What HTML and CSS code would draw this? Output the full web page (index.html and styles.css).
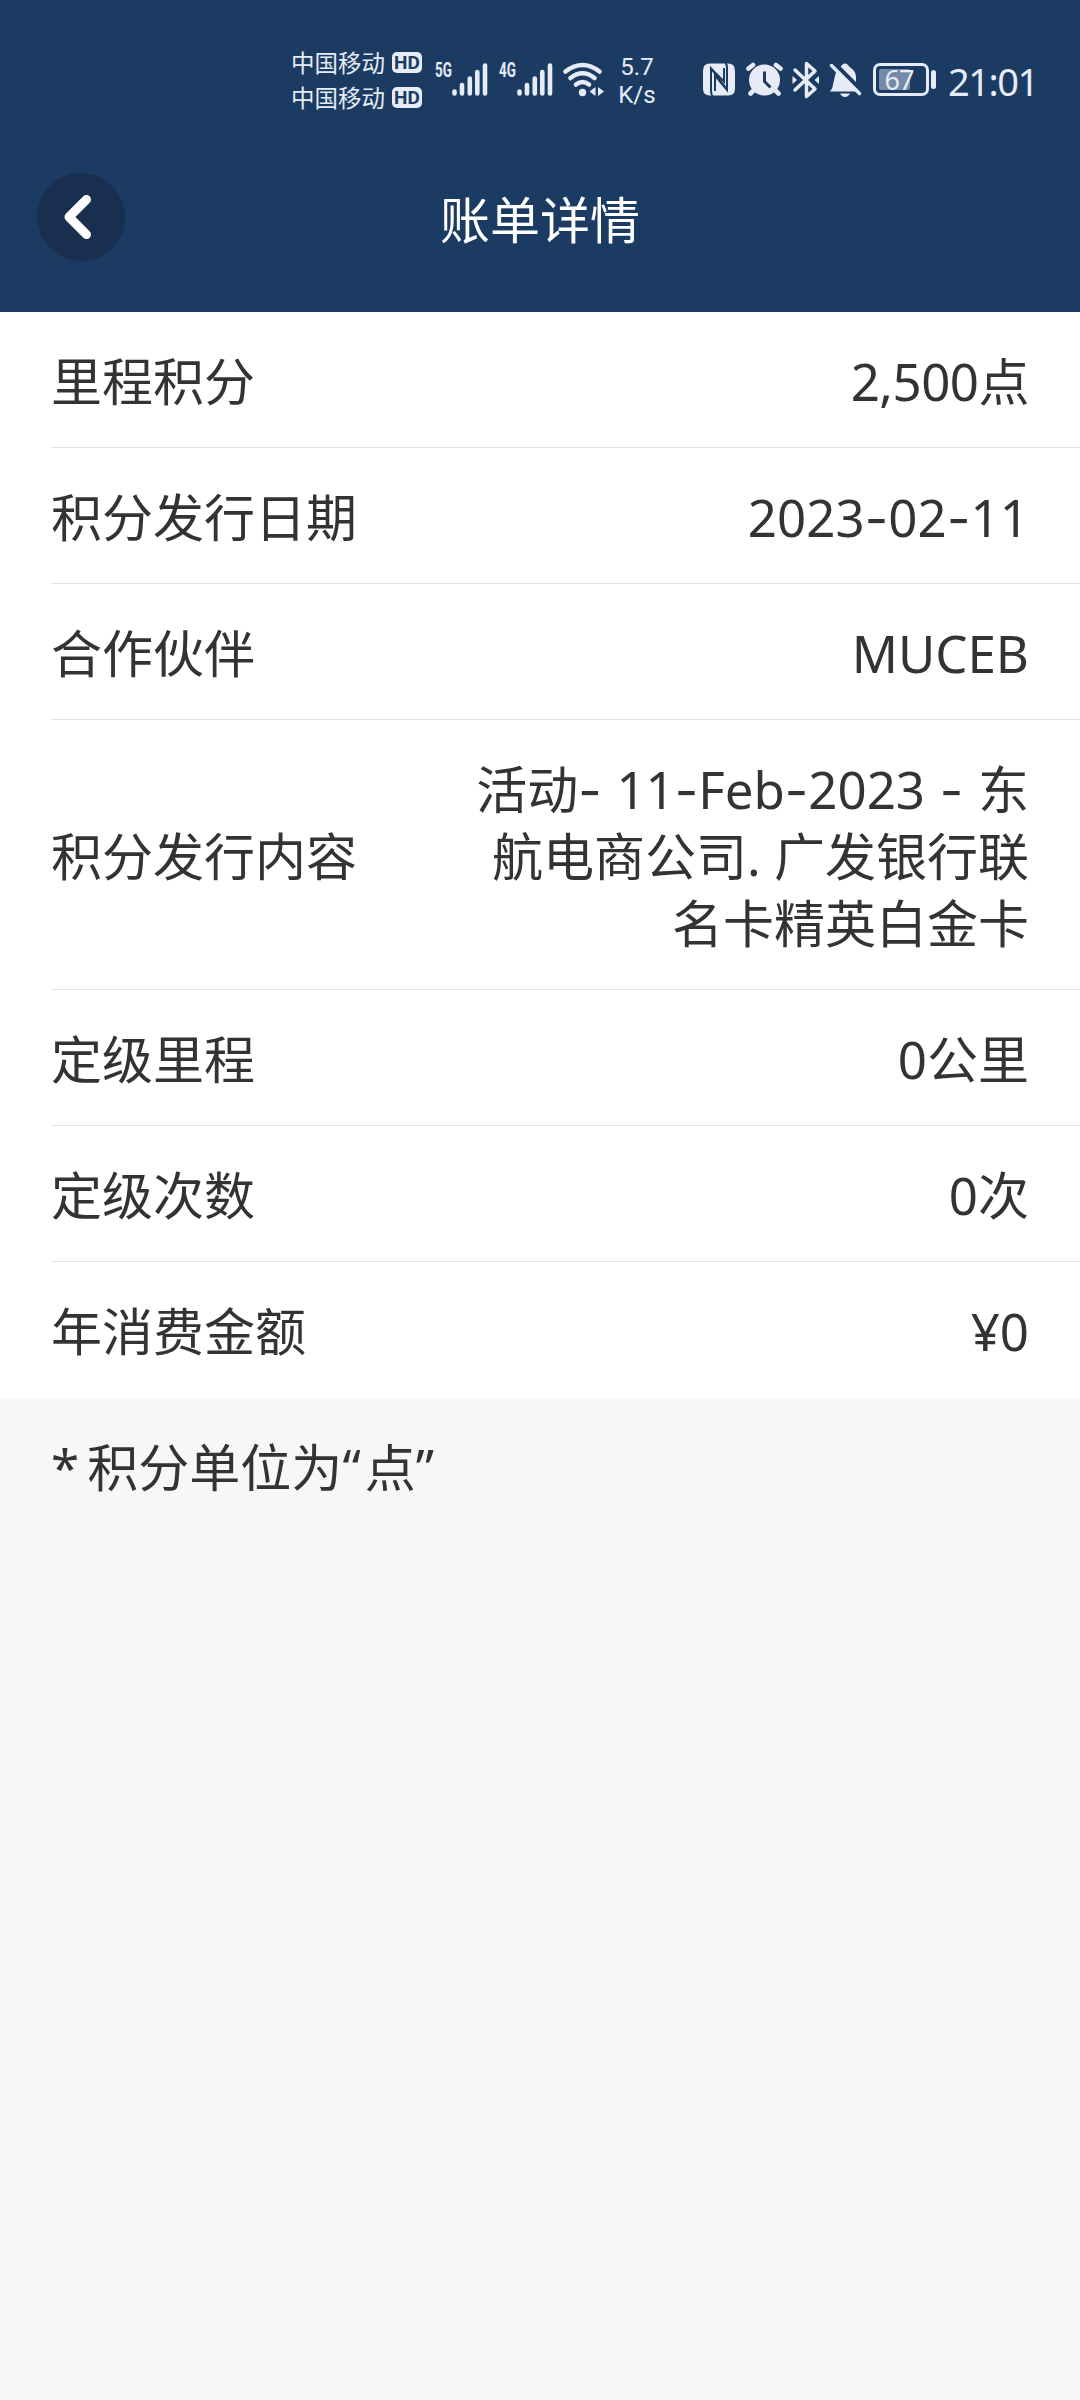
FILE: index.html
```html
<!DOCTYPE html>
<html lang="zh-CN">
<head>
<meta charset="utf-8">
<title>账单详情</title>
<link rel="stylesheet" href="styles.css">
</head>
<body>
<header class="header">
  <div class="status">
    <div class="carriers">
      <div class="carrier">中国移动<span class="hd">HD</span></div>
      <div class="carrier">中国移动<span class="hd">HD</span></div>
    </div>
    <div class="signal">
      <span class="net">5G</span>
      <svg width="36" height="40" viewBox="0 0 36 40"><path d="M2.500 31.500v2M10 25v8.500M17.800 18.500v15M25.300 12v21.500M33 5.500v28"/></svg>
    </div>
    <div class="signal signal-4g">
      <span class="net">4G</span>
      <svg width="36" height="40" viewBox="0 0 36 40"><path d="M2.500 31.500v2M10 25v8.500M17.800 18.500v15M25.300 12v21.500M33 5.500v28"/></svg>
    </div>
    <svg class="wifi" width="42" height="40" viewBox="0 0 42 40">
      <path class="line" d="M2.500 11.500Q19.500-1.500 36.500 11.500M7.500 18Q19.500 8.500 31.500 18M13 24.500Q19.500 19.500 26 24.500"/>
      <circle cx="19.500" cy="32.500" r="3.700"/><path d="M32.500 27v9l-6-4.500zM35 27v9l6-4.500z"/>
    </svg>
    <div class="speed"><span>5.7</span><span>K/s</span></div>
    <svg class="nfc" width="32" height="40" viewBox="0 0 32 40">
      <path d="M7 3.500h18q7 0 7 7v18q0 7-7 7H7q-7 0-7-7v-18q0-7 7-7z"/>
      <path class="cut thin-cut" d="M9.500 36q-1.500-1.500-1.500-5V8.500l15.500 20M22.500 3q1.500 1.500 1.500 5v22L12 15.500V31"/>
      <path class="cut thin-cut" d="M8 8.500l13 13V8"/>
    </svg>
    <svg class="alarm" width="37" height="40" viewBox="0 0 37 40">
      <circle cx="18.500" cy="20" r="15.500"/>
      <path class="line" d="M2.500 8.500L7 5M34.500 8.500L30 5M8 30l-3.500 3.500M29 30l3.500 3.500"/>
      <path class="cut" d="M18.500 11.500v10l6 6"/>
    </svg>
    <svg class="bluetooth" width="28" height="40" viewBox="0 0 28 40">
      <path class="thin" d="M3 10l20 19-8.500 7.500V3.500L23 11 3 30"/>
      <path d="M.5 16v8l4.500-4zM27 16v8l-4.500-4z"/>
    </svg>
    <svg class="bell" width="32" height="40" viewBox="0 0 32 40">
      <path d="M6 16Q7 10 11.500 7q2-3.500 4.500-3.500T20.500 7Q27 10.500 27 18v7l3 6.500H1q3-3 3-7zM11 33.500h10q-2 3.500-5 3.500T11 33.500z"/>
      <path class="cut wide" d="M5 3.500l27 27"/><path class="thin" d="M2.500 5.500l28 28"/>
    </svg>
    <div class="battery"><div class="cell"><i class="charge"></i><span>67</span></div><i class="tip"></i></div>
    <time class="clock">21:01</time>
  </div>
  <nav class="nav">
    <button class="back" aria-label="返回"><svg width="88" height="88" viewBox="0 0 88 88"><path d="M49.500 26.500L32 44l17.500 17.500"/></svg></button>
    <h1 class="title">账单详情</h1>
  </nav>
</header>
<main>
  <dl class="list">
    <div class="row"><dt>里程积分</dt><dd class="points">2,500点</dd></div>
    <div class="row"><dt>积分发行日期</dt><dd class="date">2023<b>-</b>02<b>-</b>11</dd></div>
    <div class="row"><dt>合作伙伴</dt><dd>MUCEB</dd></div>
    <div class="row tall"><dt>积分发行内容</dt><dd><span class="wide-words">活动<b>-</b> 11<b>-</b>Feb<b>-</b>2023 <b>-</b> 东</span><br>航电商公司. 广发银行联<br>名卡精英白金卡</dd></div>
    <div class="row"><dt>定级里程</dt><dd>0公里</dd></div>
    <div class="row"><dt>定级次数</dt><dd>0次</dd></div>
    <div class="row"><dt>年消费金额</dt><dd>¥0</dd></div>
  </dl>
  <p class="note">* 积分单位为<span class="quote">“</span>点<span class="quote">”</span></p>
</main>
</body>
</html>
```
FILE: styles.css
```css
* { box-sizing: border-box; }
body {
  margin: 0;
  min-height: 2400px;
  background: #f7f7f7;
  color: #333;
  font: 51px/67px "Noto Sans", "Noto Sans CJK SC", sans-serif;
}
.header { height: 312px; background: #1b3b63; color: #e6ebf5; }
.status { display: flex; height: 122px; padding: 0 40px 0 291px; }
.status svg { flex: none; margin-top: 60px; fill: #e6ebf5; overflow: visible; }
.carriers { width: 131px; padding-top: 45px; }
.carrier {
  display: flex;
  align-items: center;
  justify-content: space-between;
  height: 35px;
  font: 23.500px/35px "Noto Sans CJK SC", sans-serif;
  white-space: nowrap;
}
.hd {
  width: 30px;
  height: 21px;
  border-radius: 5px;
  background: #e6ebf5;
  color: #1b3b63;
  font: bold 19px/21px Roboto, sans-serif;
  text-align: center;
}
.signal { display: flex; width: 53px; margin-left: 13px; }
.signal-4g { width: 54px; margin-left: 11px; }
.net {
  width: 17px;
  padding-top: 60px;
  font: bold 21px/21px Roboto, sans-serif;
  transform: scaleX(.64);
  transform-origin: left;
}
.signal-4g .net { width: 18px; }
.status .signal svg, .line { fill: none; stroke: #e6ebf5; stroke-width: 4.600; stroke-linecap: round; }
.wifi { margin-left: 10px; }
.cut { fill: none; stroke: #1b3b63; stroke-width: 3; }
.thin-cut { stroke-width: 2; }
.wide { stroke-width: 5; }
.thin { fill: none; stroke: #e6ebf5; stroke-width: 3.500; stroke-linecap: round; stroke-linejoin: round; }
.speed {
  display: flex;
  flex-direction: column;
  width: 60px;
  margin-left: 2px;
  padding-top: 53px;
  font: 24px/28px Roboto, sans-serif;
  text-align: center;
}
.status .nfc { margin-left: 36px; }
.status .alarm { margin-left: 11px; }
.status .bluetooth { margin-left: 9px; }
.status .bell { margin-left: 9px; }
.battery { display: flex; margin: 63px 0 0 12px; }
.cell {
  display: grid;
  width: 56px;
  height: 33px;
  padding: 3px;
  border: 3px solid #e6ebf5;
  border-radius: 7px;
}
.cell > * { grid-area: 1 / 1; }
.charge { width: 31px; height: 21px; border-radius: 2px; background: #748aa6; }
.cell span { width: 40px; font: 27px/21px "Noto Sans", sans-serif; text-align: center; letter-spacing: -1px; }
.tip { width: 5px; height: 19px; margin: 7px 0 0 2px; border-radius: 3px; background: #e6ebf5; }
.clock { margin: 56px 0 0 12px; font: 38px/50px "Noto Sans", sans-serif; letter-spacing: -1.500px; }
.nav { display: grid; grid-template-columns: 88px 1fr 88px; align-items: center; height: 190px; padding: 0 37px; }
.back { width: 88px; height: 88px; padding: 0; border: 0; border-radius: 50%; background: #182f4f; }
.back svg { display: block; fill: none; stroke: #fff; stroke-width: 9; stroke-linecap: round; stroke-linejoin: round; }
.title { margin: 0; color: #fff; font: 50px/74px "Noto Sans CJK SC", sans-serif; text-align: center; }
.list { margin: 0; background: #fff; padding-left: 51px; }
.row {
  display: flex;
  align-items: center;
  justify-content: space-between;
  height: 136px;
  padding: 4px 51px 0 0;
  border-bottom: 1px solid #e2e2e2;
  white-space: nowrap;
}
.row:last-child { padding-top: 3px; border: 0; }
.tall { height: 270px; }
dd { margin: 0; text-align: right; }
dd b { font-family: Inter, sans-serif; font-weight: 400; line-height: 0; }
.points { letter-spacing: -.500px; }
.date { letter-spacing: .100px; }
.wide-words { word-spacing: 1.500px; }
.note { margin: 0; padding: 36px 51px; word-spacing: -5px; }
.quote { letter-spacing: 4px; }
```
